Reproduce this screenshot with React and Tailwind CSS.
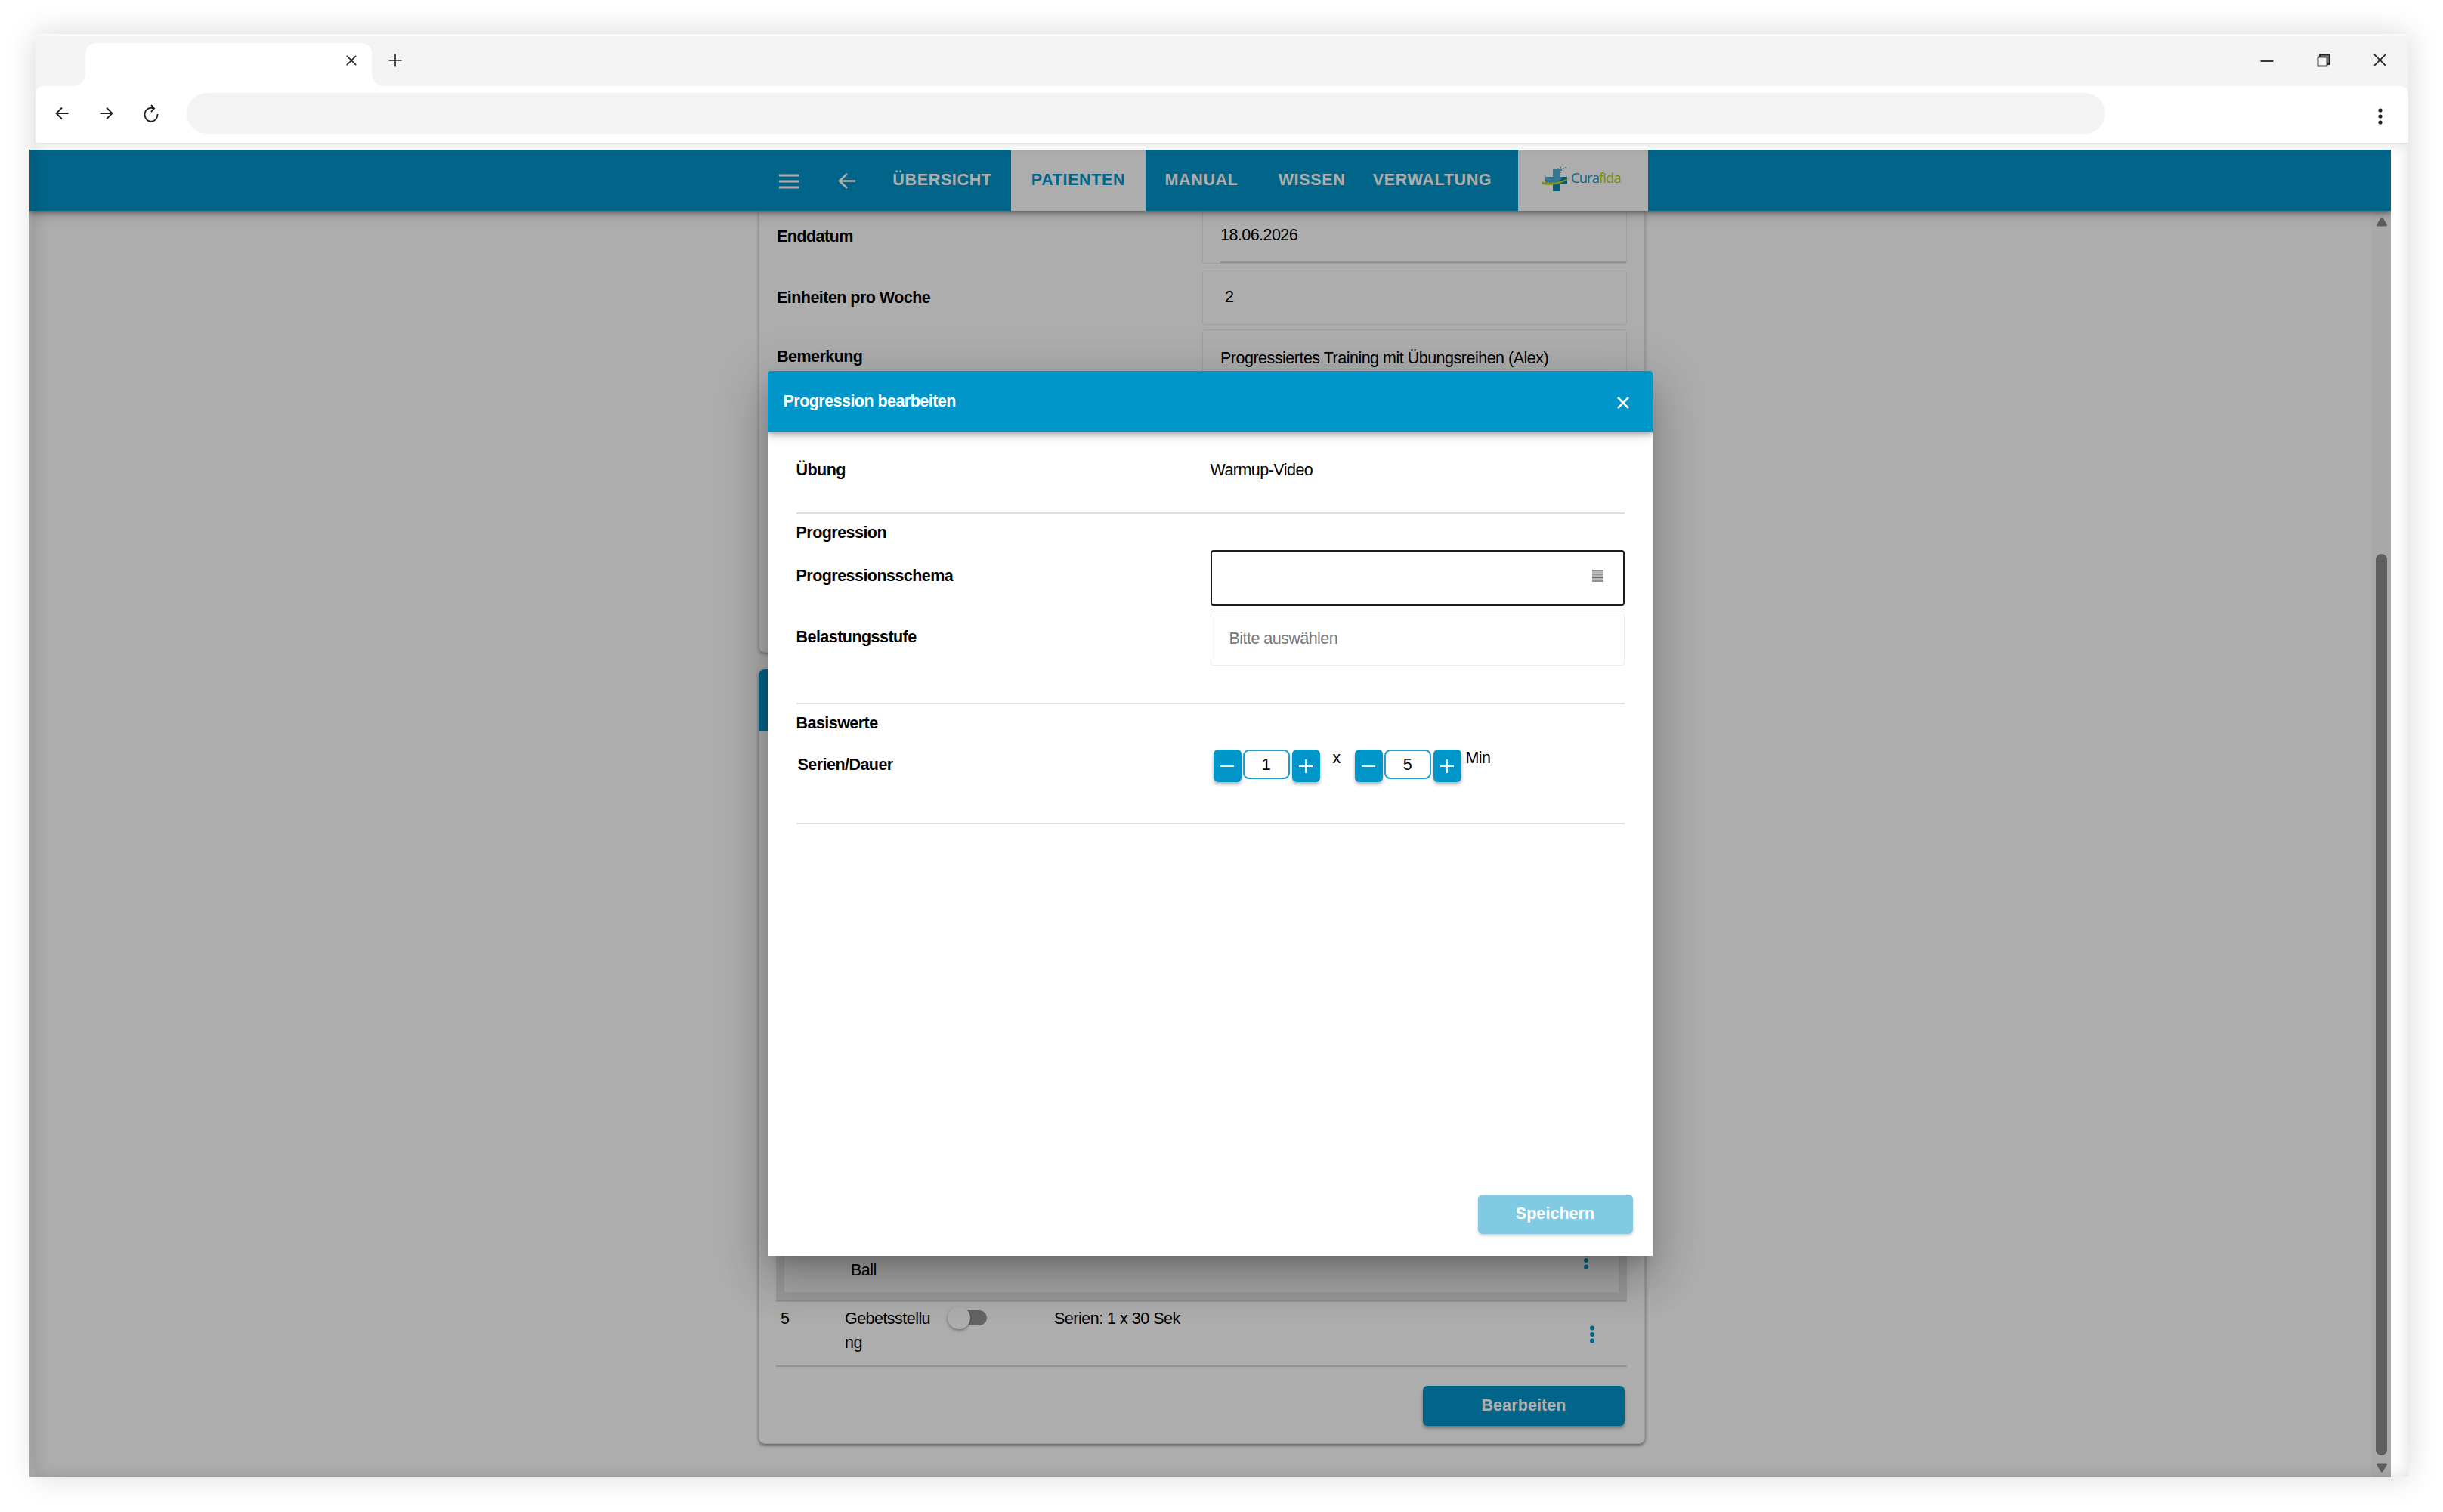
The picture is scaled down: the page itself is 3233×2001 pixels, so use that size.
const NAV = [
  { label:'ÜBERSICHT',  box:'w-[182px] text-white' },
  { label:'PATIENTEN',  box:'w-[178px] bg-white text-[#0096c9]' },
  { label:'MANUAL',     box:'w-[148px] text-white' },
  { label:'WISSEN',     box:'w-[144px] text-white' },
  { label:'VERWALTUNG', box:'w-[175px] text-white' },
]

const Cross = ({ size, width, className }) => (
  <svg width={size} height={size} viewBox="0 0 16 16" fill="none" stroke="currentColor" strokeWidth={width} className={className}>
    <path d="M1 1l14 14M15 1L1 15" />
  </svg>
)

const Dots = ({ className }) => (
  <svg width="8" height="24" viewBox="0 0 8 24" fill="currentColor" className={className}>
    <circle cx="4" cy="3.5" r="3" />
    <circle cx="4" cy="12" r="3" />
    <circle cx="4" cy="20.5" r="3" />
  </svg>
)

function BrowserBar() {
  return (
    <header className="h-36 rounded-t-lg bg-[#f3f3f3] text-[#222]">
      {/* Tab strip */}
      <div className="flex h-[69px] pt-3 pl-[50px]">
        <div className="w-4 self-end h-4 bg-[radial-gradient(circle_at_0_0,#f3f3f3_15.5px,#fff_16px)]" />
        <div className="flex w-[379px] justify-end rounded-t-[14px] bg-white pt-4 pr-[20px]">
          <Cross size={14} width={1.8} />
        </div>
        <div className="w-4 self-end h-4 bg-[radial-gradient(circle_at_100%_0,#f3f3f3_15.5px,#fff_16px)]" />
        <svg width="18" height="18" viewBox="0 0 18 18" stroke="currentColor" strokeWidth="1.6" className="mt-[14px] ml-[6px]">
          <path d="M9 .5v17M.5 9h17" />
        </svg>
        <div className="ml-auto flex pr-[29px]">
          <svg width="18" height="18" viewBox="0 0 18 18" stroke="currentColor" strokeWidth="1.8" className="mt-[15px] mr-[57px]">
            <path d="M.5 9h17" />
          </svg>
          <svg width="18" height="18" viewBox="0 0 18 18" fill="none" stroke="currentColor" strokeWidth="1.8" className="mt-[14px] mr-[57px]">
            <path d="M4 4V1.500h12.500V14H14" fill="#999" />
            <rect x="1.5" y="4.5" width="12" height="12" fill="#f3f3f3" />
          </svg>
          <Cross size={17} width={1.6} className="mt-[14px]" />
        </div>
      </div>
      {/* Toolbar */}
      <div className="flex h-[75px] items-center rounded-t-[10px] bg-white pl-[26px] pb-[3px]">
        <svg width="18" height="18" viewBox="0 0 18 18" fill="none" stroke="currentColor" strokeWidth="1.8">
          <path d="M17.500 9H1.500M9 1.500L1.500 9L9 16.500" />
        </svg>
        <svg width="18" height="18" viewBox="0 0 18 18" fill="none" stroke="currentColor" strokeWidth="1.8" className="ml-[41px]">
          <path d="M.5 9h16M9 1.500L16.500 9L9 16.500" />
        </svg>
        <svg width="20" height="24" viewBox="0 0 20 24" fill="none" stroke="currentColor" strokeWidth="1.9" className="ml-[40px]">
          <path d="M18.500 13A8.500 9 0 1 1 13.500 5.500M10 1l4 4.500l-4 4.500" />
        </svg>
        <div className="ml-[37px] h-[54px] w-[2539px] rounded-full bg-[#f3f3f3]" />
        <svg width="8" height="22" viewBox="0 0 8 22" fill="currentColor" className="mt-[7px] mr-[33px] ml-auto">
          <circle cx="4" cy="3" r="2.6" />
          <circle cx="4" cy="11" r="2.6" />
          <circle cx="4" cy="19" r="2.6" />
        </svg>
      </div>
    </header>
  )
}

function Logo() {
  return (
    <div className="ml-[26px] flex h-full w-[172px] bg-white pt-[22px] pl-[31px]">
      <svg width="38" height="34" viewBox="0 0 38 34">
        <path d="M15 4h9v29h-9z" fill="#0b8ab8" />
        <path d="M5 14h29v9H5z" fill="#0b8ab8" />
        <path d="M15 4h9v10h4l-4 5l-9 3H5v-8h10z" fill="#4fb0d6" />
        <path d="M0 20.500c12 2.500 25 .5 37-5c-9 8-25 11.500-37 8z" fill="#bcd916" />
        <g fill="#2f9cc8">
          <circle cx="22" cy="3.5" r="1.1" /><circle cx="25" cy="1.500" r=".9" /><circle cx="26" cy="5" r="1.1" />
          <circle cx="29" cy="3" r=".9" /><circle cx="25" cy="8" r="1" /><circle cx="32" cy="1.500" r=".8" />
        </g>
      </svg>
      <span className="mt-[3px] ml-px font-['Open_Sans',sans-serif] text-[18.5px] leading-6 font-medium tracking-[-0.95px] text-[#129ccc]">
        Cura<span className="text-[#b4d414]">fida</span>
      </span>
    </div>
  )
}

function NavBar() {
  return (
    <nav className="relative flex h-[81px] shrink-0 bg-[#0096c9] pl-[992px] text-white shadow-[0_3px_6px_rgba(0,0,0,0.35),0_6px_16px_rgba(0,0,0,0.15)]">
      <svg width="27" height="20" viewBox="0 0 27 20" stroke="currentColor" strokeWidth="3" className="mt-8">
        <path d="M0 2h26.500M0 10h26.500M0 18h26.500" />
      </svg>
      <svg width="24" height="22" viewBox="0 0 24 22" fill="none" stroke="currentColor" strokeWidth="2.6" className="mt-[30px] ml-[51px]">
        <path d="M23 11.500H2M12 2L2 11.500L12 21" />
      </svg>
      <div className="ml-[23px] flex">
        {NAV.map(({ label, box }) => (
          <span key={label} className={`pt-7 text-center font-bold tracking-[0.65px] ${box}`}>{label}</span>
        ))}
      </div>
      <Logo />
    </nav>
  )
}

function PlanCard() {
  return (
    <section className="grid h-[585px] w-[1173px] grid-cols-[563px_562px] content-start rounded-b-lg border border-t-0 border-[#e6e6e6] bg-white pl-[23px] shadow-[0_2px_4px_rgba(0,0,0,0.3)]">
      <span className="pt-[22px] font-bold">Enddatum</span>
      <div className="flex h-[70px] flex-col justify-between rounded-b border-x-[1.5px] border-b-[1.5px] border-[#ebebeb] pt-5 pl-[23px]">
        <span>18.06.2026</span>
        <div className="h-[2px] bg-[#d5d5d5]" />
      </div>
      <span className="mt-[9px] pt-6 font-bold">Einheiten pro Woche</span>
      <div className="mt-[9px] h-[72px] rounded border-[1.5px] border-[#ebebeb] pt-[22px] pl-[29px]">2</div>
      <span className="mt-1.5 pt-6 font-bold">Bemerkung</span>
      <div className="mt-1.5 h-[140px] rounded border-[1.5px] border-[#ebebeb] pt-[25px] pl-[23px] tracking-[-0.5px]">
        Progressiertes Training mit Übungsreihen (Alex)
      </div>
    </section>
  )
}

function ExerciseCard() {
  return (
    <section className="mt-[22px] flex h-[1025px] w-[1173px] flex-col rounded-lg border border-[#e6e6e6] bg-white shadow-[0_2px_4px_rgba(0,0,0,0.45)]">
      <div className="-mx-px -mt-px h-[82px] rounded-t-lg bg-[#0096c9]" />
      <div className="mt-auto flex flex-col pr-[23px] pb-[23px] pl-[22px]">
        <div className="flex h-[121px] items-end border-[11px] border-[#e3e3e3] bg-[#f5f5f5] shadow-[0_1.5px_0_#cacaca]">
          <span className="pb-[17px] pl-[88px]">Ball</span>
          <Dots className="mr-[39px] mb-[30px] ml-auto text-[#0096c9]" />
        </div>
        <div className="flex h-[88px] border-b-2 border-[#d6d6d6] pt-2 pl-[6px] leading-8">
          <span className="w-[85px]">5</span>
          <span className="w-[119px] break-all">Gebetsstellung</span>
          <div className="mt-0.5 ml-[17px] h-[30px] w-[52px]">
            <div className="mt-[3px] flex h-5 items-center rounded-full bg-[#949494]">
              <span className="size-[30px] rounded-full bg-white shadow-[0_2px_4px_rgba(0,0,0,0.35)]" />
            </div>
          </div>
          <span className="ml-[89px] tracking-[-0.5px]">Serien: 1 x 30 Sek</span>
          <Dots className="mt-[25px] mr-[42px] ml-auto text-[#0096c9]" />
        </div>
        <button className="mt-[25px] mr-[3px] h-[53px] w-[267px] self-end rounded-md bg-[#0096c9] font-bold tracking-[0.1px] text-white shadow-[0_3px_4px_rgba(0,0,0,0.35)]">
          <span className="relative -top-px">Bearbeiten</span>
        </button>
      </div>
    </section>
  )
}

function Scrollbar() {
  return (
    <div className="ml-auto flex w-[25px] flex-col items-center bg-[#fafafa] text-[#8b8b8b]">
      <svg width="16" height="13" viewBox="0 0 16 13" fill="currentColor" stroke="currentColor" strokeWidth="3" strokeLinejoin="round" className="mt-2">
        <path d="M8 2l5.500 9h-11z" />
      </svg>
      <div className="mt-[433px] h-[1193px] w-[15px] rounded-full bg-[#8b8b8b]" />
      <svg width="16" height="13" viewBox="0 0 16 13" fill="currentColor" stroke="currentColor" strokeWidth="3" strokeLinejoin="round" className="mt-[10px]">
        <path d="M8 11l5.500-9h-11z" />
      </svg>
    </div>
  )
}

const Step = ({ plus }) => (
  <button className="flex h-[43px] w-[37px] items-center justify-center rounded-md bg-[#0096c9] shadow-[0_3px_4px_rgba(0,0,0,0.3)]">
    <svg width="18" height="18" viewBox="0 0 18 18" stroke="#fff" strokeWidth="1.8">
      <path d={plus ? 'M0 9h18M9 0v18' : 'M0 9h18'} />
    </svg>
  </button>
)

const Counter = ({ value }) => (
  <div className="flex">
    <Step />
    <span className="mr-[3px] ml-[2px] flex h-[39px] w-[62px] items-center justify-center rounded-lg border-2 border-[#1a9fd0]">{value}</span>
    <Step plus />
  </div>
)

function ProgressionDialog() {
  return (
    <div className="flex size-[1171px] flex-col overflow-hidden rounded-t-[3px] bg-white">
      <div className="flex h-[81px] shrink-0 items-start justify-between bg-[#0096c9] pt-7 pl-[21px] pr-[31px] text-white shadow-[0_3px_6px_rgba(0,0,0,0.25),0_6px_14px_rgba(0,0,0,0.12)]">
        <h2 className="font-bold">Progression bearbeiten</h2>
        <Cross size={16} width={2.6} className="mt-[6px]" />
      </div>
      <div className="flex grow flex-col pr-[37px] pl-[38px] pt-[38px]">
        <div className="grid grid-cols-[548px_1fr]">
          <span className="font-bold">Übung</span>
          <span>Warmup-Video</span>
        </div>
        <hr className="mt-11 border-t-2 border-[#e0e0e0]" />
        <h3 className="mt-[13px] font-bold">Progression</h3>
        <div className="mt-[11px] grid grid-cols-[548px_1fr]">
          <span className="pt-[22px] font-bold">Progressionsschema</span>
          <div className="flex h-[74px] justify-end rounded border-2 border-[#1c1c1c] pt-6 pr-[26px]">
            <svg width="15" height="16" viewBox="0 0 15 16" strokeWidth="2">
              <path d="M0 0h15v16H0z" fill="#b8b8b8" />
              <path d="M0 1h15M0 6h15M0 15h15" stroke="#909090" />
              <path d="M0 10h15" stroke="#6a6a6a" />
            </svg>
          </div>
        </div>
        <div className="mt-1.5 grid grid-cols-[548px_1fr]">
          <span className="pt-[23px] font-bold">Belastungsstufe</span>
          <div className="h-[73px] rounded border-[1.5px] border-[#ebebeb] pt-6 pl-6 text-[#777]">Bitte auswählen</div>
        </div>
        <hr className="mt-[49px] border-t-2 border-[#e0e0e0]" />
        <h3 className="mt-[13px] font-bold">Basiswerte</h3>
        <div className="mt-[23px] grid grid-cols-[548px_1fr]">
          <span className="pt-2 pl-0.5 font-bold">Serien/Dauer</span>
          <div className="flex pl-1">
            <Counter value={1} />
            <span className="-mt-px mx-[17px] w-[12px]">x</span>
            <Counter value={5} />
            <span className="-mt-px ml-[6px]">Min</span>
          </div>
        </div>
        <hr className="mt-[54px] border-t-2 border-[#e0e0e0]" />
        <button className="mt-auto -mr-[11px] mb-[29px] h-[52px] w-[205px] self-end rounded-md bg-[#80cae4] font-bold tracking-[0.05px] text-white shadow-[0_2px_4px_rgba(0,0,0,0.2)]">
          <span className="relative -top-px">Speichern</span>
        </button>
      </div>
    </div>
  )
}

export default function App() {
  return (
    <div className="relative h-[2001px] w-[3233px] overflow-hidden bg-white pt-[45px] pl-[47px] font-['Liberation_Sans',Arial,sans-serif] text-[21.5px] leading-6 tracking-[-0.54px] text-black">
      <div className="w-[3140px]">
        <BrowserBar />
        <main className="relative mt-[9px] -ml-2 flex h-[1757px] w-[3125px] flex-col overflow-hidden bg-white">
          <NavBar />
          <div className="flex min-h-0 grow">
            <div className="ml-[965px]">
              <PlanCard />
              <ExerciseCard />
            </div>
            <Scrollbar />
          </div>
          {/* Backdrop + dialog */}
          <div className="absolute inset-0 flex items-center justify-center bg-black/32 pr-px">
            <div className="rounded-t-[3px] shadow-[0_16px_22px_-10px_rgba(0,0,0,0.2),0_35px_56px_4px_rgba(0,0,0,0.14),0_13px_67px_12px_rgba(0,0,0,0.12)]">
              <ProgressionDialog />
            </div>
          </div>
        </main>
      </div>

      {/* Window outline and its shadows lie over the page */}
      <div className="pointer-events-none absolute top-[45px] right-[46px] bottom-[47px] left-[47px] rounded-t-lg border-t-2 border-white/60 shadow-[0_0_40px_rgba(0,0,0,0.16)]" />
      <div className="pointer-events-none absolute top-[189px] right-[46px] bottom-[47px] left-[47px] border-t border-[#e4e4e4] shadow-[inset_0_0_20px_rgba(0,0,0,0.12)]" />
    </div>
  )
}
